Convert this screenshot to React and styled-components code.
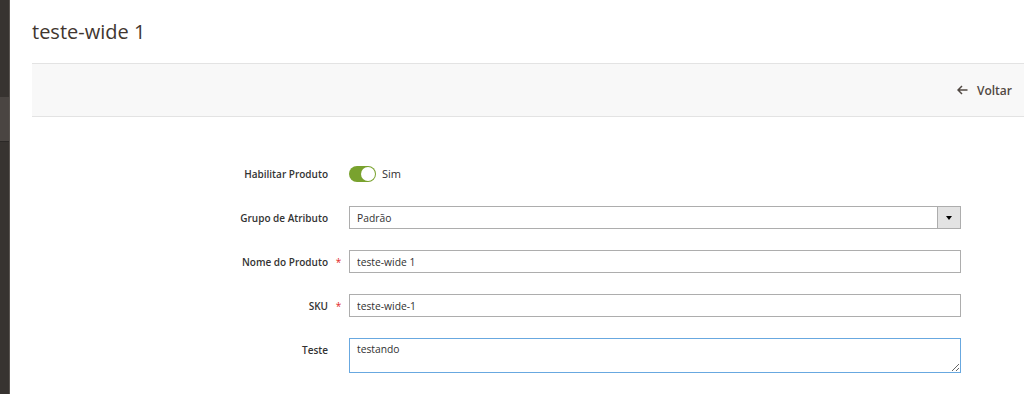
import React from 'react';
import styled, { createGlobalStyle } from 'styled-components';

const GlobalStyle = createGlobalStyle`
  body {
    margin: 0;
    background: #fff;
    font-family: 'Open Sans', 'Liberation Sans', sans-serif;
    color: #303030;
  }
`;

const Page = styled.div`
  display: flex;
  width: 1024px;
  height: 394px;
  overflow: hidden;
`;

const Sidebar = styled.div`
  width: 10px;
  flex-shrink: 0;
  background: #373330;
  border-right: 1px solid #5a5551;
  display: flex;
  flex-direction: column;
  box-sizing: border-box;
`;

const SideItem = styled.div`
  height: ${(p) => p.h}px;
  background: ${(p) => (p.active ? '#4a4542' : 'transparent')};
  border-bottom: ${(p) => (p.active ? '1px solid #2b2826' : 'none')};
`;

const Main = styled.div`
  flex: 1;
  padding-left: 22px;
  display: flex;
  flex-direction: column;
`;

const Title = styled.h1`
  margin: 0;
  height: 63px;
  display: flex;
  align-items: center;
  font-size: 20px;
  font-weight: 400;
  color: #41362f;
  padding-bottom: 1px;
  box-sizing: border-box;
`;

const ActionsBar = styled.div`
  height: 54px;
  background: #f8f8f8;
  border-top: 1px solid #e3e3e3;
  border-bottom: 1px solid #e3e3e3;
  display: flex;
  align-items: center;
  justify-content: flex-end;
  padding-right: 12px;
  box-sizing: border-box;
`;

const BackButton = styled.button`
  border: none;
  background: none;
  display: flex;
  align-items: center;
  gap: 9px;
  font-family: inherit;
  font-size: 12px;
  font-weight: 600;
  color: #514943;
  padding: 0;
  cursor: pointer;
`;

const Form = styled.div`
  padding-top: 45px;
  display: flex;
  flex-direction: column;
  gap: 21px;
`;

const Row = styled.div`
  display: flex;
  align-items: ${(p) => (p.top ? 'flex-start' : 'center')};
  min-height: 23px;
`;

const Label = styled.label`
  width: 296px;
  text-align: right;
  font-size: 10px;
  font-weight: 600;
  color: #333;
  padding-top: ${(p) => (p.top ? '5px' : '0')};
`;

const Star = styled.span`
  width: 21px;
  text-align: center;
  color: #e22626;
  font-size: 10px;
  padding-top: ${(p) => (p.top ? '5px' : '0')};
`;

const Control = styled.div`
  width: 612px;
  display: flex;
  align-items: center;
`;

const Input = styled.input`
  width: 100%;
  height: 23px;
  box-sizing: border-box;
  border: 1px solid #adadad;
  padding: 0 7px;
  font-family: inherit;
  font-size: 10.3px;
  color: #303030;
  outline: none;
`;

const TextArea = styled.textarea`
  width: 100%;
  height: 35px;
  box-sizing: border-box;
  border: 1px solid #68a8e0;
  padding: 3px 7px;
  font-family: inherit;
  font-size: 10.3px;
  color: #303030;
  outline: none;
  resize: vertical;
`;

const Select = styled.div`
  width: 100%;
  height: 23px;
  box-sizing: border-box;
  border: 1px solid #adadad;
  display: flex;
  align-items: center;
  font-size: 10.3px;
  color: #303030;
`;

const SelectValue = styled.span`
  flex: 1;
  padding-left: 7px;
`;

const SelectArrow = styled.span`
  width: 22px;
  height: 100%;
  background: #e3e3e3;
  border-left: 1px solid #adadad;
  display: flex;
  align-items: center;
  justify-content: center;

  &::after {
    content: '';
    border-left: 3px solid transparent;
    border-right: 3px solid transparent;
    border-top: 4px solid #000;
  }
`;

const Switch = styled.span`
  width: 27px;
  height: 16px;
  border-radius: 8px;
  background: #79a22e;
  position: relative;
  flex-shrink: 0;

  &::after {
    content: '';
    position: absolute;
    right: 1px;
    top: 1px;
    width: 14px;
    height: 14px;
    border-radius: 50%;
    background: #fff;
  }
`;

const SwitchText = styled.span`
  font-size: 11px;
  color: #303030;
  margin-left: 6px;
`;

const ArrowLeft = () => (
  <svg width="11" height="10" viewBox="0 0 11 10" fill="none" stroke="#514943" strokeWidth="1.5">
    <path d="M10.5 5H1.5M5 1L1 5l4 4" />
  </svg>
);

export default function App() {
  return (
    <>
      <GlobalStyle />
      <Page>
        <Sidebar>
          <SideItem h={97} />
          <SideItem h={44} active />
          <SideItem h={253} />
        </Sidebar>
        <Main>
          <Title>teste-wide 1</Title>
          <ActionsBar>
            <BackButton>
              <ArrowLeft />
              Voltar
            </BackButton>
          </ActionsBar>
          <Form>
            <Row>
              <Label>Habilitar Produto</Label>
              <Star />
              <Control>
                <Switch />
                <SwitchText>Sim</SwitchText>
              </Control>
            </Row>
            <Row>
              <Label>Grupo de Atributo</Label>
              <Star />
              <Control>
                <Select>
                  <SelectValue>Padrão</SelectValue>
                  <SelectArrow />
                </Select>
              </Control>
            </Row>
            <Row>
              <Label>Nome do Produto</Label>
              <Star>*</Star>
              <Control>
                <Input defaultValue="teste-wide 1" />
              </Control>
            </Row>
            <Row>
              <Label>SKU</Label>
              <Star>*</Star>
              <Control>
                <Input defaultValue="teste-wide-1" />
              </Control>
            </Row>
            <Row top>
              <Label top>Teste</Label>
              <Star top />
              <Control>
                <TextArea defaultValue="testando" />
              </Control>
            </Row>
          </Form>
        </Main>
      </Page>
    </>
  );
}
